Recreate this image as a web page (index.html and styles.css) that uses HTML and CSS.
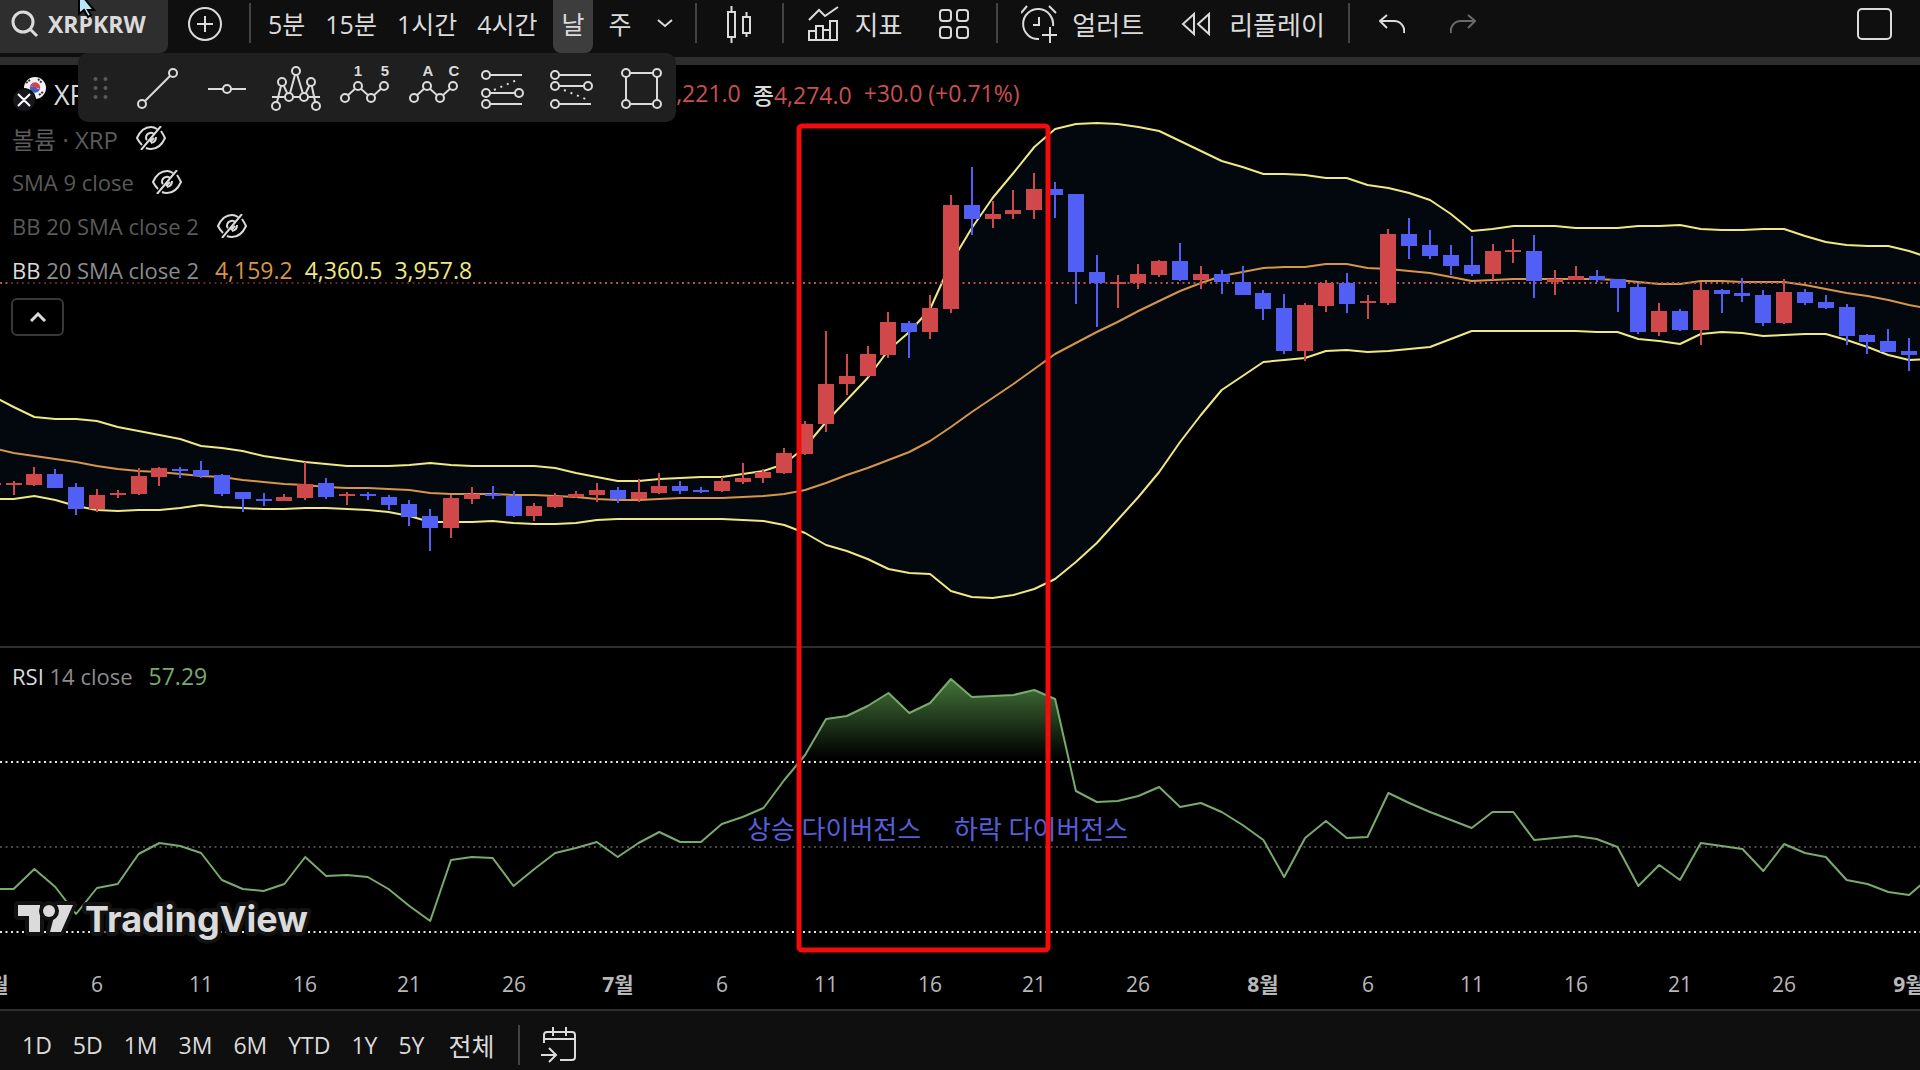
FILE: index.html
```html
<!DOCTYPE html>
<html lang="ko">
<head>
  <meta charset="UTF-8">
  <meta name="viewport" content="width=device-width, initial-scale=1.0">
  <title>XRPKRW</title>
  <link rel="stylesheet" href="styles.css">
</head>
<body>
  <!-- Top toolbar -->
  <header class="toolbar">
    <button class="symbol-search">
      <svg class="icon" width="28" height="28" viewBox="0 0 28 28" stroke-width="3"><circle cx="12" cy="12" r="10"/><path d="M19 19l7 7"/></svg>
      XRPKRW
    </button>
    <button class="icon-btn compare" aria-label="Compare">
      <svg class="icon" width="36" height="36" viewBox="0 0 36 36" stroke-width="2"><circle cx="18" cy="18" r="16"/><path d="M10 18h16M18 10v16"/></svg>
    </button>
    <span class="sep"></span>
    <nav class="intervals">
      <button>5분</button>
      <button>15분</button>
      <button>1시간</button>
      <button>4시간</button>
      <button class="active">날</button>
      <button>주</button>
    </nav>
    <button class="chevron-btn" aria-label="Intervals">
      <svg class="icon" width="16" height="10" viewBox="0 0 16 10" stroke-width="2"><path d="M1 1l7 6 7-6"/></svg>
    </button>
    <span class="sep"></span>
    <button class="icon-btn" aria-label="Candles">
      <svg class="icon" width="28" height="38" viewBox="0 0 28 38" stroke-width="2"><path d="M3 7h7v25H3zM6.500 1v6M6.500 32v6M18 12h7v16h-7zM21.500 7v5M21.500 28v4"/></svg>
    </button>
    <span class="sep"></span>
    <button class="text-btn">
      <svg class="icon" width="33" height="36" viewBox="0 0 33 36" stroke-width="2"><path d="M2 14L12 4l6 6L31 1M2 34V25h7v9M9 34V20h7v14M16 34V24h7v10M23 34V15h7v19M1 34h30"/></svg>
      지표
    </button>
    <button class="icon-btn" aria-label="Layouts">
      <svg class="icon" width="30" height="32" viewBox="0 0 30 32" stroke-width="2"><rect x="1" y="2" width="11" height="11" rx="3"/><rect x="18" y="2" width="11" height="11" rx="3"/><rect x="1" y="19" width="11" height="11" rx="3"/><rect x="18" y="19" width="11" height="11" rx="3"/></svg>
    </button>
    <span class="sep"></span>
    <button class="text-btn">
      <svg class="icon" width="36" height="38" viewBox="0 0 36 38" stroke-width="2"><path d="M32 21a15 15 0 1 0-14 13M18 12v8h-6M0 8l6-7M28 1l7 7M29 22v16M21 30h15"/></svg>
      얼러트
    </button>
    <button class="text-btn">
      <svg class="icon" width="38" height="24" viewBox="0 0 38 24" stroke-width="2"><path d="M18 2v20L7 12zM33 2v20L22 12z"/></svg>
      리플레이
    </button>
    <span class="sep"></span>
    <button class="icon-btn" aria-label="Undo">
      <svg class="icon" width="26" height="20" viewBox="0 0 26 20" stroke-width="2"><path d="M8 1L1 7l7 7M1 7h14a10 10 0 0 1 10 12"/></svg>
    </button>
    <button class="icon-btn dim" aria-label="Redo">
      <svg class="icon" width="26" height="20" viewBox="0 0 26 20" stroke-width="2"><path d="M18 1l7 6-7 7M25 7H11A10 10 0 0 0 1 19"/></svg>
    </button>
    <button class="icon-btn layout-btn" aria-label="Layout">
      <svg class="icon" width="36" height="34" viewBox="0 0 36 34" stroke-width="2"><rect x="1" y="2" width="33" height="30" rx="4"/></svg>
    </button>
  </header>

  <!-- Floating drawing tools -->
  <div class="drawing-tools">
    <svg class="drag-dots" width="16" height="24" viewBox="0 0 16 24"><circle cx="3" cy="3" r="2"/><circle cx="13" cy="3" r="2"/><circle cx="3" cy="12" r="2"/><circle cx="13" cy="12" r="2"/><circle cx="3" cy="21" r="2"/><circle cx="13" cy="21" r="2"/></svg>
    <button aria-label="Trend line">
      <svg class="icon" viewBox="0 0 56 56"><path d="M12 44L43 13"/><g class="knots"><circle cx="12" cy="44" r="4"/><circle cx="43" cy="13" r="4"/></g></svg>
    </button>
    <button aria-label="Horizontal line">
      <svg class="icon" viewBox="0 0 56 56"><path d="M9 29h38"/><g class="knots"><circle cx="28" cy="29" r="4"/></g></svg>
    </button>
    <button aria-label="Head and shoulders">
      <svg class="icon" viewBox="0 0 56 56"><path d="M4 37h48M8 46l6-24 7 15 7-26 8 26 7-15 5 24"/><g class="knots"><circle cx="8" cy="46" r="4"/><circle cx="14" cy="22" r="4"/><circle cx="21" cy="37" r="4"/><circle cx="28" cy="11" r="4"/><circle cx="36" cy="37" r="4"/><circle cx="43" cy="22" r="4"/><circle cx="48" cy="46" r="4"/></g></svg>
    </button>
    <button aria-label="Elliott impulse wave">
      <svg class="icon" viewBox="0 0 56 56"><path d="M8 38l13-12 13 12 13-12"/><g class="knots"><circle cx="8" cy="38" r="4"/><circle cx="21" cy="26" r="4"/><circle cx="34" cy="38" r="4"/><circle cx="47" cy="26" r="4"/></g><text x="21" y="16">1</text><text x="48" y="16">5</text></svg>
    </button>
    <button aria-label="Elliott correction wave">
      <svg class="icon" viewBox="0 0 56 56"><path d="M8 38l13-12 13 12 13-12"/><g class="knots"><circle cx="8" cy="38" r="4"/><circle cx="21" cy="26" r="4"/><circle cx="34" cy="38" r="4"/><circle cx="47" cy="26" r="4"/></g><text x="22" y="16">A</text><text x="48" y="16">C</text></svg>
    </button>
    <button aria-label="Fib extension">
      <svg class="icon" viewBox="0 0 56 56"><path d="M11 15h36M11 33h33M11 44h36"/><path class="dots" d="M19 30l25-11"/><g class="knots"><circle cx="11" cy="15" r="4"/><circle cx="11" cy="33" r="4"/><circle cx="44" cy="33" r="4"/><circle cx="11" cy="44" r="4"/></g></svg>
    </button>
    <button aria-label="Fib retracement">
      <svg class="icon" viewBox="0 0 56 56"><path d="M11 15h36M11 26h33M11 44h36"/><path class="dots" d="M20 30l24 10"/><g class="knots"><circle cx="11" cy="15" r="4"/><circle cx="11" cy="26" r="4"/><circle cx="44" cy="26" r="4"/><circle cx="11" cy="44" r="4"/></g></svg>
    </button>
    <button aria-label="Rectangle">
      <svg class="icon" viewBox="0 0 56 56"><path d="M13 13h31v31H13z"/><g class="knots"><circle cx="13" cy="13" r="4"/><circle cx="44" cy="13" r="4"/><circle cx="44" cy="44" r="4"/><circle cx="13" cy="44" r="4"/></g></svg>
    </button>
  </div>

  <main class="chart">
    <svg id="plot" class="plot" viewBox="0 65 1920 944" role="img" aria-label="XRPKRW">
      <defs>
        <linearGradient id="rsi-fill" gradientUnits="userSpaceOnUse" x1="0" y1="672" x2="0" y2="758">
          <stop offset="0" stop-color="#4a7f3f"/>
          <stop offset="1" stop-color="#4a7f3f" stop-opacity="0"/>
        </linearGradient>
        <clipPath id="overbought"><rect x="0" y="650" width="1920" height="112"/></clipPath>
      </defs>
      <path class="pane-line" d="M0 647H1920"/>
      <g id="series"></g>
      <text class="divergence" x="747" y="839">상승 다이버전스</text>
      <text class="divergence" x="954" y="839">하락 다이버전스</text>
      <rect class="marker" x="799" y="126" width="249" height="824" rx="3"/>
      <a href="#" class="brand" aria-label="TradingView">
        <path d="M18 905h22v27H29v-16H18zM57 905h16l-12 27H50z"/>
        <circle cx="49" cy="911" r="6"/>
        <text x="85" y="932">TradingView</text>
      </a>
      <g id="time-axis" class="time-axis"></g>
    </svg>

    <div class="legend">
      <div class="legend-row main-row">
        <svg class="pair-logo" width="36" height="36" viewBox="0 0 36 36">
          <circle cx="24" cy="12" r="11" fill="#f2f2f6"/>
          <path d="M19 10a5 5 0 0 1 10 3z" fill="#d8434b"/>
          <path d="M19 10a5 5 0 0 0 10 3c-3 1-4-3-7-2z" fill="#3d62c4"/>
          <path d="M15 7l4-3M27 3l4 4M28 19l4-3" stroke="#333" stroke-width="2" stroke-dasharray="2 1"/>
          <circle cx="13" cy="24" r="12" fill="#000"/>
          <circle cx="13" cy="24" r="11" fill="#17171b"/>
          <path d="M7 18l4 4q2 2 4 0l4-4M7 30l4-4q2-2 4 0l4 4" fill="none" stroke="#fff" stroke-width="2"/>
        </svg>
        <span class="pair">XRP</span>
        <span class="ohlc"><span>4,221.0</span><span><b>종</b>4,274.0</span><span>+30.0 (+0.71%)</span></span>
      </div>
      <div class="legend-row off volume">볼륨 · XRP <button class="eye" aria-label="Show"></button></div>
      <div class="legend-row off">SMA 9 close <button class="eye" aria-label="Show"></button></div>
      <div class="legend-row off">BB 20 SMA close 2 <button class="eye" aria-label="Show"></button></div>
      <div class="legend-row">
        <span><b>BB</b> 20 SMA close 2</span>
        <span class="values"><span class="mid">4,159.2</span><span>4,360.5</span><span>3,957.8</span></span>
      </div>
      <button class="collapse" aria-label="Collapse">
        <svg class="icon" width="16" height="10" viewBox="0 0 16 10" stroke-width="3"><path d="M1 9l7-7 7 7"/></svg>
      </button>
    </div>

    <div class="legend rsi-legend">
      <div class="legend-row"><span><b>RSI</b> 14 close</span><span class="rsi-value">57.29</span></div>
    </div>
  </main>

  <!-- Date ranges -->
  <footer class="ranges">
    <button>1D</button>
    <button>5D</button>
    <button>1M</button>
    <button>3M</button>
    <button>6M</button>
    <button>YTD</button>
    <button>1Y</button>
    <button>5Y</button>
    <button class="all">전체</button>
    <span class="sep"></span>
    <button class="goto" aria-label="Go to date">
      <svg class="icon" width="36" height="36" viewBox="0 0 36 36" stroke-width="2"><path d="M3 16V8q0-3 3-3h25q3 0 3 3v22q0 3-3 3H19M3 12h31M12 0v9M25 0v9M0 28h14M8 21l7 7-7 7"/></svg>
    </button>
  </footer>

  <svg class="cursor" width="20" height="20" viewBox="0 0 20 20"><path d="M1-8v22l5-4 4 7 3-2-3-5 6 0z"/></svg>

  <script src="chart.js"></script>
</body>
</html>
```

FILE: styles.css
```css
* {
  box-sizing: border-box;
}

body {
  margin: 0;
  min-height: 100vh;
  display: flex;
  flex-direction: column;
  background: #000;
  color: #dbdbdb;
  font-family: "Open Sans", "Noto Sans CJK KR", sans-serif;
  font-size: 22px;
  overflow-x: hidden;
}

button {
  display: flex;
  align-items: center;
  justify-content: center;
  margin: 0;
  padding: 0;
  border: none;
  background: none;
  color: inherit;
  font: inherit;
  white-space: nowrap;
  cursor: pointer;
}

.icon {
  display: block;
  flex: none;
  fill: none;
  stroke: currentColor;
}

.sep {
  width: 2px;
  height: 40px;
  margin: 0 7px;
  background: #434343;
  flex: none;
}

/* Top toolbar */
.toolbar {
  display: flex;
  align-items: center;
  height: 65px;
  padding-bottom: 4px;
  background: #0f0f0f;
  border-bottom: 8px solid #2e2e2e;
  font-size: 25px;
}

.toolbar .sep {
  margin-bottom: 8px;
}

.toolbar button {
  height: 53px;
  padding-bottom: 6px;
  flex: none;
}

.toolbar .symbol-search {
  width: 168px;
  gap: 9px;
  padding-left: 11px;
  justify-content: flex-start;
  background: #2e2e2e;
  border-radius: 0 0 8px 0;
  font-size: 23px;
  font-weight: 700;
}

.icon-btn {
  width: 71px;
}

.compare {
  width: 74px;
}

.dim {
  color: #6a6a6a;
}

.intervals {
  display: flex;
}

.toolbar .intervals button {
  padding: 0 10px 8px;
}

.toolbar .intervals .active {
  margin: 0 6px;
  padding: 0 8px 8px;
  background: #3d3d3d;
  border-radius: 0 0 8px 8px;
}

.chevron-btn {
  width: 46px;
}

.text-btn {
  gap: 15px;
}

.toolbar .text-btn {
  padding: 0 16px 6px;
  font-size: 26px;
}

.toolbar .layout-btn {
  width: 90px;
  margin-left: auto;
}

/* Floating drawing tools */
.drawing-tools {
  position: absolute;
  top: 53px;
  left: 78px;
  z-index: 2;
  display: flex;
  align-items: center;
  height: 69px;
  padding-right: 1px;
  background: #1f1f1f;
  border-radius: 10px;
}

.drag-dots {
  width: 45px;
  fill: #5a5a5a;
}

.drawing-tools button {
  width: 69px;
}

.drawing-tools .icon {
  width: 56px;
  height: 56px;
  stroke-width: 2;
}

.knots {
  fill: #1f1f1f;
}

.dots {
  stroke-dasharray: 2 5;
}

.drawing-tools text {
  fill: #dbdbdb;
  stroke: none;
  font: bold 15px "Liberation Sans", sans-serif;
  text-anchor: middle;
}

/* Chart */
.chart {
  position: relative;
  flex: 1;
}

.plot {
  display: block;
  width: 100%;
}

.pane-line {
  stroke: #2e2e2e;
  stroke-width: 2;
}

.band {
  fill: #03070e;
}

.bb-line,
.bb-mid,
.rsi-line {
  fill: none;
  stroke-width: 2;
  stroke-linejoin: round;
}

.bb-line {
  stroke: #f0e882;
}

.bb-mid {
  stroke: #d6964a;
}

.rsi-line {
  stroke: #79ab6c;
}

.up {
  fill: #d1484b;
}

.down {
  fill: #525ff5;
}

.level {
  stroke: #e8e8e8;
  stroke-width: 2;
  stroke-dasharray: 2 3.5;
}

.level.middle {
  stroke: #474747;
}

.level.price {
  stroke: #b5514f;
}

.divergence {
  fill: #565ed8;
  font-size: 26px;
}

.marker {
  fill: none;
  stroke: #f20d0d;
  stroke-width: 5;
}

.brand {
  fill: #dbdbdb;
  stroke: #121212;
  stroke-width: 8;
  stroke-linejoin: round;
  paint-order: stroke;
  font: 700 36px Inter, sans-serif;
}

.time-axis {
  fill: #b8b8b8;
  font-size: 21px;
  text-anchor: middle;
}

.time-axis .month {
  font-weight: 700;
}

/* Legends */
.legend {
  position: absolute;
  top: 7px;
  left: 11px;
}

.rsi-legend {
  top: 589px;
}

.legend-row {
  display: flex;
  align-items: center;
  width: max-content;
  height: 44px;
  padding-left: 1px;
  gap: 16px;
  color: #8c8c8c;
  white-space: nowrap;
  background: rgba(0, 0, 0, 0.5);
}

.legend-row b {
  color: #dbdbdb;
  font-weight: 500;
}

.legend-row.off {
  color: #5a5a5a;
  gap: 18px;
}

.legend-row.volume {
  font-size: 24px;
}

.main-row {
  padding-left: 0;
  gap: 7px;
}

.pair {
  width: 602px;
  color: #dbdbdb;
  font-size: 27px;
}

.ohlc {
  display: flex;
  gap: 12px;
  color: #c94f51;
  font-size: 23px;
}

.values {
  display: flex;
  gap: 12px;
  color: #f0e882;
  font-size: 23px;
  font-weight: 500;
}

.values .mid {
  color: #d6964a;
}

.rsi-value {
  color: #79ab6c;
  font-size: 23px;
}

.eye {
  color: #dbdbdb;
}

.collapse {
  width: 53px;
  height: 38px;
  margin-top: 6px;
  border: 2px solid #383838;
  border-radius: 6px;
}

/* Date ranges */
.ranges {
  display: flex;
  align-items: center;
  gap: 21px;
  height: 61px;
  padding: 8px 22px 0;
  background: #0f0f0f;
  border-top: 2px solid #2e2e2e;
  font-size: 23px;
}

.ranges .sep {
  margin: 0;
}

.ranges .all {
  padding: 0 3px;
  font-size: 25px;
}

.cursor {
  position: absolute;
  top: 0;
  left: 78px;
  z-index: 3;
  fill: #b9e6fa;
  stroke: #000;
  stroke-width: 2;
}
```

FILE: chart.js
```js
const NS = "http://www.w3.org/2000/svg";
const series = document.getElementById("series");
const axis = document.getElementById("time-axis");

// one bar per day, bar 0 is June 2
const x = i => 13.6 + 20.83 * i;

// color, high, body top, body bottom, low
const candles = [
  ["u",483,483,485,485],["u",481,483,485,495],["u",467,474,485,486],["d",469,474,488,488],["d",483,487,509,515],
  ["u",489,495,509,512],["u",490,493,495,498],["u",468,476,494,495],["u",467,468,477,486],["d",467,469,471,478],
  ["d",461,470,476,478],["d",474,475,494,496],["d",492,492,499,512],["d",493,499,501,506],["u",494,497,501,501],
  ["u",462,484,498,500],["d",478,483,497,499],["u",492,494,496,505],["d",492,494,496,500],["d",495,497,505,510],
  ["d",500,504,517,526],["d",509,516,528,551],["u",495,498,528,538],["u",487,494,499,504],["d",486,494,496,499],
  ["d",491,496,516,517],["u",503,506,516,521],["u",493,496,507,508],["u",491,494,497,498],["u",483,490,495,502],
  ["d",487,490,499,503],["u",479,492,499,502],["u",473,486,493,494],["d",481,486,491,494],["d",487,490,491,493],
  ["u",477,481,491,492],["u",463,478,482,484],["u",469,472,478,483],["u",448,453,473,474],["u",421,424,454,455],
  ["u",331,384,424,432],["u",354,376,384,395],["u",346,354,376,377],["u",312,322,355,358],["d",321,323,332,358],
  ["u",295,308,332,339],["u",195,205,309,313],["d",167,205,219,235],["u",201,214,219,228],["u",190,210,214,219],
  ["u",173,189,210,219],["d",182,189,195,218],["d",194,194,272,304],["d",255,272,283,327],["u",275,282,283,308],
  ["u",264,274,283,289],["u",260,261,275,277],["d",243,261,280,281],["u",266,274,280,289],["d",270,274,282,294],
  ["d",266,282,295,295],["d",290,293,309,320],["d",294,308,351,354],["u",303,305,351,361],["u",280,283,306,312],
  ["d",273,283,304,313],["u",295,301,302,319],["u",229,234,303,305],["d",218,234,246,259],["d",230,245,256,259],
  ["d",245,255,266,275],["d",236,265,274,276],["u",244,251,274,280],["u",239,250,251,263],["d",235,251,281,298],
  ["u",270,279,282,295],["u",266,276,280,280],["d",270,276,280,282],["d",279,279,288,312],["d",283,287,332,334],
  ["u",303,311,332,336],["d",309,311,330,331],["u",282,290,330,345],["d",289,290,294,313],["d",278,293,296,302],
  ["d",290,295,323,326],["u",279,292,323,324],["d",289,292,303,305],["d",295,302,308,309],["d",304,307,336,345],
  ["d",334,335,342,354],["d",329,341,352,352],["d",338,351,355,371]
];

// all lines start at bar -1
const upper = [
  396,407,417,419,419,421,427,431,435,439,446,448,451,456,459,462,464,466,466,466,465,463,465,466,466,466,466,468,473,477,
  481,481,479,478,477,477,474,471,464,447,422,400,378,350,332,309,263,228,198,173,147,129,124,123,124,127,131,141,151,161,
  167,174,174,175,178,178,185,188,193,200,214,231,229,226,226,226,228,228,228,226,226,225,229,230,230,229,229,236,242,245,
  246,246,251,258
];
const middle = [
  448,453,456,459,462,466,469,471,472,474,476,477,480,482,484,485,487,488,488,489,490,493,494,494,494,495,495,496,497,499,
  500,500,499,498,498,498,497,496,494,490,483,475,468,460,452,441,427,412,398,384,369,354,343,332,322,311,301,291,283,276,
  272,268,267,267,264,264,268,269,271,273,277,281,280,279,279,279,279,279,280,282,284,284,281,281,282,282,282,285,289,293,
  296,300,305,309
];
const lower = [
  499,499,496,500,506,510,511,510,510,508,505,507,508,509,509,508,508,509,510,512,516,522,522,522,521,523,524,524,523,520,
  519,519,519,519,519,519,520,521,525,533,545,551,559,569,573,574,591,597,598,595,589,579,562,543,520,497,472,442,415,390,
  376,362,360,358,351,350,352,351,349,347,339,331,331,331,331,331,331,332,332,339,341,344,334,332,333,336,335,334,334,340,
  347,355,360,359
];
const rsi = [
  889,889,869,887,914,888,884,854,843,846,853,880,889,891,884,857,876,875,877,889,906,921,860,857,858,886,869,853,848,842,
  857,843,832,842,842,824,817,808,780,755,719,716,706,693,713,703,679,697,696,695,690,699,791,802,801,796,787,807,803,812,
  825,840,877,838,821,838,837,793,803,812,820,828,812,812,840,838,836,839,847,886,865,880,843,846,849,871,844,853,857,880,
  884,892,895,877
];

function add(parent, tag, attrs) {
  const el = document.createElementNS(NS, tag);
  for (const key in attrs) el.setAttribute(key, attrs[key]);
  parent.appendChild(el);
  return el;
}

const points = values => values.map((y, i) => `${x(i - 1).toFixed(1)},${y}`);
const level = (y, name) => add(series, "path", { class: "level " + name, d: `M0 ${y}H1920` });

// Bollinger bands
add(series, "polygon", { class: "band", points: points(upper).concat(points(lower).reverse()).join(" ") });
add(series, "polyline", { class: "bb-line", points: points(upper).join(" ") });
add(series, "polyline", { class: "bb-line", points: points(lower).join(" ") });
add(series, "polyline", { class: "bb-mid", points: points(middle).join(" ") });
level(283, "price");

// Candles
candles.forEach(([dir, high, top, bottom, low], i) => {
  const cx = Math.round(x(i - 1));
  const name = dir === "u" ? "up" : "down";
  add(series, "rect", { class: name, x: cx - 1, y: high, width: 2, height: low - high });
  add(series, "rect", { class: name, x: cx - 8, y: top, width: 16, height: Math.max(bottom - top, 2) });
});

// RSI
add(series, "polygon", {
  points: `${x(-1)},762 ${points(rsi).join(" ")} ${x(92)},762`,
  fill: "url(#rsi-fill)",
  "clip-path": "url(#overbought)"
});
level(762, "");
level(847, "middle");
level(932, "");
add(series, "polyline", { class: "rsi-line", points: points(rsi).join(" ") });

// Time axis
const labels = [
  [-1, "6월"], [4, "6"], [9, "11"], [14, "16"], [19, "21"], [24, "26"],
  [29, "7월"], [34, "6"], [39, "11"], [44, "16"], [49, "21"], [54, "26"],
  [60, "8월"], [65, "6"], [70, "11"], [75, "16"], [80, "21"], [85, "26"], [91, "9월"]
];
labels.forEach(([i, label]) => {
  const t = add(axis, "text", { x: Math.round(x(i)), y: 992 });
  if (label.endsWith("월")) t.setAttribute("class", "month");
  t.textContent = label;
});

// Hidden-indicator icons
document.querySelectorAll(".eye").forEach(btn => {
  const svg = add(btn, "svg", { class: "icon", width: 30, height: 24, viewBox: "0 0 30 24", "stroke-width": 2 });
  add(svg, "path", { d: "M21 3Q18 1 15 1 6 1 1 12q2 4 5 7M10 22q2 1 5 1 9 0 14-11-2-4-4-7M18 8q-2-2-4-1-4 1-4 5 0 1 1 2M20 11q0 5-5 6M25 0L5 24M18 12l-4 4" });
});
```
